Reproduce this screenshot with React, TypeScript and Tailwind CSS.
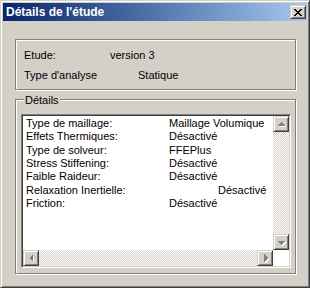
import React from "react";

const rows: [string, string, string?][] = [
  ["Type de maillage:", "Maillage Volumique"],
  ["Effets Thermiques:", "Désactivé"],
  ["Type de solveur:", "FFEPlus"],
  ["Stress Stiffening:", "Désactivé"],
  ["Faible Raideur:", "Désactivé"],
  ["Relaxation Inertielle:", "Désactivé", "pl-[49px]"],
  ["Friction:", "Désactivé"],
];

const raised =
  "bg-[#d4d0c8] border border-[#d4d0c8] border-r-[#404040] border-b-[#404040] shadow-[inset_1px_1px_#fff,inset_-1px_-1px_#808080]";

const track =
  "bg-[conic-gradient(#fff_25%,#d4d0c8_0_50%,#fff_0_75%,#d4d0c8_0)] bg-[length:2px_2px]";

// disabled arrow: grey triangle with a white offset copy
const Arrow = ({ dir }: { dir: "up" | "down" | "left" | "right" }) => {
  const pts = {
    up: "7,5 3,9 11,9",
    down: "3,6 11,6 7,10",
    left: "5,7 9,3 9,11",
    right: "6,3 10,7 6,11",
  }[dir];
  return (
    <svg width="14" height="14" viewBox="0 0 14 14" shapeRendering="crispEdges">
      <polygon points={pts} fill="#fff" transform="translate(1,1)" />
      <polygon points={pts} fill="#808080" />
    </svg>
  );
};

const ScrollBtn = ({ dir }: { dir: "up" | "down" | "left" | "right" }) => (
  <div className={`w-[16px] h-[16px] shrink-0 ${raised} flex items-center justify-center`}>
    <Arrow dir={dir} />
  </div>
);

const CloseGlyph = () => {
  const px: [number, number][] = [];
  for (let i = 0; i < 7; i++) {
    const l = i <= 3 ? i : 6 - i;
    px.push([l, i], [l + 1, i], [7 - l, i], [6 - l, i]);
  }
  return (
    <svg width="8" height="7" viewBox="0 0 8 7" shapeRendering="crispEdges">
      {px.map(([x, y], k) => (
        <rect key={k} x={x} y={y} width="1" height="1" fill="#000" />
      ))}
    </svg>
  );
};

export default function App() {
  return (
    <div className="w-[310px] h-[288px] bg-[#d4d0c8] border border-[#d4d0c8] border-r-[#404040] border-b-[#404040] shadow-[inset_1px_1px_#fff,inset_-1px_-1px_#808080] p-[2px] font-['Liberation_Sans',Arial,sans-serif] text-[11px] leading-[13px] text-black">
      {/* Title bar */}
      <div className="h-[18px] flex items-center justify-between pl-[3px] pr-[1px] bg-gradient-to-r from-[#0a246a] to-[#a6caf0]">
        <span className="text-white font-bold text-[12px] leading-[14px]">Détails de l'étude</span>
        <div className={`w-[16px] h-[14px] ${raised} flex items-center justify-center`}>
          <CloseGlyph />
        </div>
      </div>

      <div className="pl-[12px] pr-[11px]">
        {/* Etude group */}
        <div className="mt-[18px] h-[51px] border border-[#808080] shadow-[inset_1px_1px_#fff,1px_1px_#fff] pt-[9px] pl-[8px]">
          <div className="flex">
            <span className="w-[86px]">Etude:</span>
            <span>version 3</span>
          </div>
          <div className="flex mt-[7px]">
            <span className="w-[114px]">Type d'analyse</span>
            <span>Statique</span>
          </div>
        </div>

        {/* Détails group */}
        <div className="relative mt-[9px] h-[175px] border border-[#808080] shadow-[inset_1px_1px_#fff,1px_1px_#fff] pt-[14px] pl-[5px]">
          <span className="absolute -top-[6px] left-[8px] px-[1px] bg-[#d4d0c8]">Détails</span>

          <div className="w-[270px] h-[154px] border border-[#808080] border-r-[#fff] border-b-[#fff] shadow-[inset_1px_1px_#404040,inset_-1px_-1px_#d4d0c8] p-[1px] bg-white">
            <div className="grid grid-cols-[250px_16px] grid-rows-[134px_16px] h-full">
              <div className="pt-[1px] pl-[3px] leading-[13.33px] overflow-hidden">
                {rows.map(([k, v, extra]) => (
                  <div key={k} className="flex whitespace-nowrap">
                    <span className="w-[143px] shrink-0">{k}</span>
                    <span className={extra}>{v}</span>
                  </div>
                ))}
              </div>
              <div className="flex flex-col">
                <ScrollBtn dir="up" />
                <div className={`flex-1 ${track}`} />
                <ScrollBtn dir="down" />
              </div>
              <div className="flex">
                <ScrollBtn dir="left" />
                <div className={`flex-1 ${track}`} />
                <ScrollBtn dir="right" />
              </div>
              <div className="bg-white" />
            </div>
          </div>
        </div>
      </div>
    </div>
  );
}
